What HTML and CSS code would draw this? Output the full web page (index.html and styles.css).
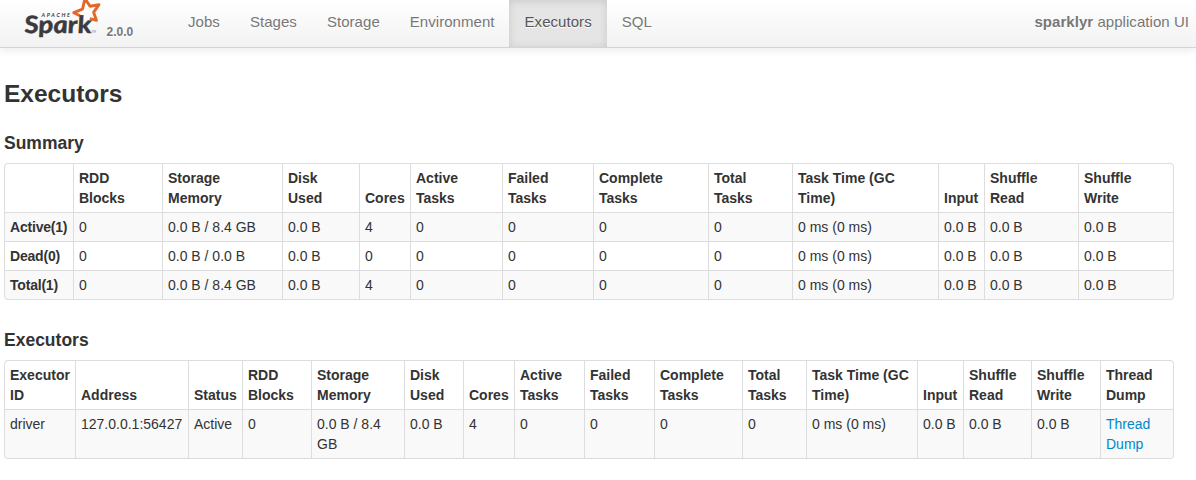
FILE: index.html
```
<!DOCTYPE html>
<html lang="en">
<head>
<meta charset="utf-8">
<title>sparklyr - Executors</title>
<link rel="stylesheet" href="styles.css">
</head>
<body>
<header class="navbar">
  <a class="brand">
    <svg class="logo" width="78" height="42" viewBox="23 0 78 42">
      <path class="star" d="M79.800 15.800L73.800 12.700L82.500 9.200L85 -1.500L90 6.200L99 4.700L93.600 12.300L96.400 20.300L89.800 18.600"/>
      <text class="logo-apache" x="41.500" y="17.200" textLength="28.500">APACHE</text>
      <text class="logo-spark" transform="translate(25 32.800) skewX(5)" textLength="67" lengthAdjust="spacingAndGlyphs">Spark</text>
      <text class="logo-tm" x="91.500" y="33">TM</text>
    </svg>
    <span class="version">2.0.0</span>
  </a>
  <nav class="nav">
    <a class="tab">Jobs</a>
    <a class="tab">Stages</a>
    <a class="tab">Storage</a>
    <a class="tab">Environment</a>
    <a class="tab active">Executors</a>
    <a class="tab">SQL</a>
  </nav>
  <p class="app-name"><strong>sparklyr</strong> application UI</p>
</header>
<main class="content">
  <h3>Executors</h3>
  <h4>Summary</h4>
  <table>
    <colgroup><col style="width:69px"><col style="width:89px"><col style="width:120px"><col style="width:77px"><col style="width:51px"><col style="width:92px"><col style="width:91px"><col style="width:115px"><col style="width:84px"><col style="width:146px"><col style="width:46px"><col style="width:94px"><col style="width:95px"></colgroup>
    <thead>
      <tr><th></th><th>RDD<br>Blocks</th><th>Storage<br>Memory</th><th>Disk<br>Used</th><th>Cores</th><th>Active<br>Tasks</th><th>Failed<br>Tasks</th><th>Complete<br>Tasks</th><th>Total<br>Tasks</th><th>Task Time (GC<br>Time)</th><th>Input</th><th>Shuffle<br>Read</th><th>Shuffle<br>Write</th></tr>
    </thead>
    <tbody>
      <tr><th>Active(1)</th><td>0</td><td>0.0 B / 8.4 GB</td><td>0.0 B</td><td>4</td><td>0</td><td>0</td><td>0</td><td>0</td><td>0 ms (0 ms)</td><td>0.0 B</td><td>0.0 B</td><td>0.0 B</td></tr>
      <tr><th>Dead(0)</th><td>0</td><td>0.0 B / 0.0 B</td><td>0.0 B</td><td>0</td><td>0</td><td>0</td><td>0</td><td>0</td><td>0 ms (0 ms)</td><td>0.0 B</td><td>0.0 B</td><td>0.0 B</td></tr>
      <tr><th>Total(1)</th><td>0</td><td>0.0 B / 8.4 GB</td><td>0.0 B</td><td>4</td><td>0</td><td>0</td><td>0</td><td>0</td><td>0 ms (0 ms)</td><td>0.0 B</td><td>0.0 B</td><td>0.0 B</td></tr>
    </tbody>
  </table>
  <h4 class="second">Executors</h4>
  <table>
    <colgroup><col style="width:71px"><col style="width:113px"><col style="width:54px"><col style="width:69px"><col style="width:93px"><col style="width:59px"><col style="width:51px"><col style="width:70px"><col style="width:70px"><col style="width:88px"><col style="width:64px"><col style="width:111px"><col style="width:46px"><col style="width:68px"><col style="width:69px"><col style="width:73px"></colgroup>
    <thead>
      <tr><th>Executor<br>ID</th><th>Address</th><th>Status</th><th>RDD<br>Blocks</th><th>Storage<br>Memory</th><th>Disk<br>Used</th><th>Cores</th><th>Active<br>Tasks</th><th>Failed<br>Tasks</th><th>Complete<br>Tasks</th><th>Total<br>Tasks</th><th>Task Time (GC<br>Time)</th><th>Input</th><th>Shuffle<br>Read</th><th>Shuffle<br>Write</th><th>Thread<br>Dump</th></tr>
    </thead>
    <tbody>
      <tr><td>driver</td><td>127.0.0.1:56427</td><td>Active</td><td>0</td><td>0.0 B / 8.4<br>GB</td><td>0.0 B</td><td>4</td><td>0</td><td>0</td><td>0</td><td>0</td><td>0 ms (0 ms)</td><td>0.0 B</td><td>0.0 B</td><td>0.0 B</td><td><a class="link">Thread<br>Dump</a></td></tr>
    </tbody>
  </table>
</main>
</body>
</html>
```

FILE: styles.css
```
* { box-sizing: border-box; }

body {
  margin: 0;
  background: #fff;
  color: #333;
  font: 14px/20px "Helvetica Neue", "Liberation Sans", Arial, sans-serif;
}

.navbar {
  display: flex;
  align-items: stretch;
  height: 48px;
  padding-right: 7px;
  background: linear-gradient(#fff, #f2f2f2);
  border-bottom: 1px solid #d4d4d4;
  box-shadow: 0 1px 10px rgba(0, 0, 0, 0.1);
  color: #777;
  font-size: 15px;
  letter-spacing: 0.05px;
  text-shadow: 0 1px 0 #fff;
}

.brand {
  display: flex;
  width: 173px;
  padding-left: 23px;
  letter-spacing: 0;
}

.logo { display: block; text-shadow: none; }
.star { fill: none; stroke: #e2692a; stroke-width: 2.9; stroke-linejoin: round; }
.logo-apache { font: italic bold 5.5px/1 Lato, sans-serif; fill: #3c3a3e; }
.logo-spark { font: italic bold 24px/1 Lato, sans-serif; fill: #3c3a3e; stroke: #3c3a3e; stroke-width: 0.5; }
.logo-tm { font: 3px/1 Lato, sans-serif; fill: #777; }

.version {
  padding: 22px 0 0 5.5px;
  font-size: 12px;
  font-weight: bold;
}

.nav { display: flex; }
.tab { padding: 12px 15px 0; }

.active {
  margin-left: -1px;
  padding-left: 16px;
  background: #e5e5e5;
  box-shadow: inset 0 1px 8px rgba(0, 0, 0, 0.125);
  color: #555;
}

.app-name { margin: 12px 0 0 auto; }

.content { padding: 26px 22px 0 4px; }

h3, h4 { margin: 0; }
h3 { font-size: 24.5px; line-height: 40px; }
h4 { margin: 19px 0 10px; font-size: 17.5px; line-height: 20px; }
h4.second { margin-top: 30px; }

table {
  width: 1170px;
  table-layout: fixed;
  border: 1px solid #ddd;
  border-left: 0;
  border-collapse: separate;
  border-spacing: 0;
  border-radius: 4px;
}

th, td {
  padding: 4px 0 4px 5px;
  border-left: 1px solid #ddd;
  text-align: left;
  vertical-align: top;
  white-space: nowrap;
}

thead th { vertical-align: bottom; }
tbody th { letter-spacing: -0.2px; }
tbody th, tbody td { border-top: 1px solid #ddd; }
tbody tr:nth-child(odd) > * { background: #f9f9f9; }
thead th:first-child { border-top-left-radius: 4px; }
tbody tr:last-child > :first-child { border-bottom-left-radius: 4px; }
tbody tr:last-child > :last-child { border-bottom-right-radius: 4px; }

.link { color: #08c; }
```
